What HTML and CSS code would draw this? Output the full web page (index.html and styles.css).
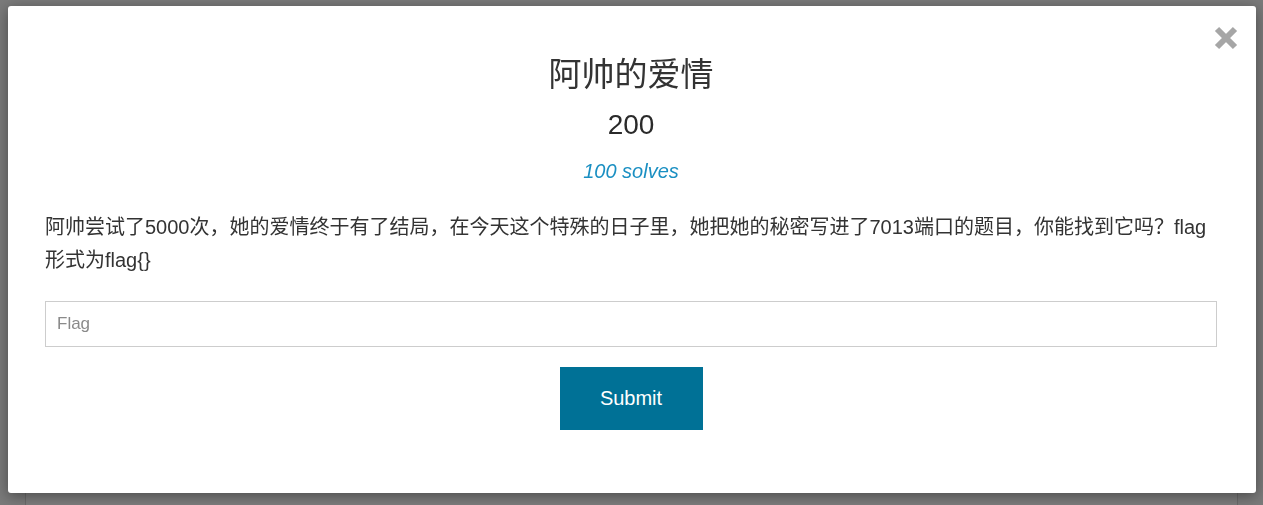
FILE: index.html
```html
<!DOCTYPE html>
<html lang="zh-CN">
<head>
<meta charset="utf-8">
<title>阿帅的爱情</title>
<link rel="stylesheet" href="styles.css">
</head>
<body>
<div class="page">
  <div class="page-card"></div>
</div>
<div class="backdrop">
  <div class="modal">
    <button class="close" aria-label="Close">
      <svg width="24" height="24" viewBox="0 0 24 24"><path d="M3 3 L21 21 M21 3 L3 21" stroke="#a6a6a6" stroke-width="6" stroke-linecap="butt"/></svg>
    </button>
    <h2 class="title">阿帅的爱情</h2>
    <div class="points">200</div>
    <div class="solves">100 solves</div>
    <p class="desc">阿帅尝试了5000次，她的爱情终于有了结局，在今天这个特殊的日子里，她把她的秘密写进了7013端口的题目，你能找到它吗？flag形式为flag{}</p>
    <input class="flag-input" type="text" placeholder="Flag">
    <div class="actions">
      <button class="submit">Submit</button>
    </div>
  </div>
</div>
</body>
</html>
```
FILE: styles.css
```css
html, body {
  margin: 0;
  padding: 0;
}
body {
  background: #7a7a7a;
  font-family: "Liberation Sans", "Noto Sans CJK SC", sans-serif;
  color: #333;
  width: 1263px;
  height: 505px;
  overflow: hidden;
}
.page {
  height: 505px;
  padding: 470px 25px 0;
  box-sizing: border-box;
}
.page-card {
  height: 100%;
  border-left: 1px solid #6a6a6a;
  border-right: 1px solid #6a6a6a;
  background: #7d7d7d;
}
.backdrop {
  position: fixed;
  inset: 0;
  padding: 6px 7px 0 8px;
}
.modal {
  position: relative;
  box-sizing: border-box;
  width: 1248px;
  height: 487px;
  background: #fff;
  border-radius: 3px;
  box-shadow: 0 3px 14px rgba(0, 0, 0, 0.4);
  padding: 46px 39px 0 37px;
  display: flex;
  flex-direction: column;
}
.close {
  position: absolute;
  top: 18px;
  right: 16px;
  width: 28px;
  height: 28px;
  padding: 2px;
  border: 0;
  background: none;
  display: flex;
  align-items: center;
  justify-content: center;
}
.title {
  margin: 0;
  text-align: center;
  font-family: "Noto Sans CJK SC", "Liberation Sans", sans-serif;
  font-weight: 400;
  font-size: 33px;
  line-height: 40px;
  color: #333;
}
.points {
  margin-top: 15px;
  text-align: center;
  font-size: 28px;
  line-height: 36px;
  color: #2a2a2a;
}
.solves {
  margin-top: 15px;
  text-align: center;
  font-style: italic;
  font-size: 20px;
  line-height: 26px;
  color: #1a8fc2;
}
.desc {
  margin: 27px 0 0;
  font-size: 20px;
  line-height: 33px;
  color: #333;
}
.flag-input {
  margin-top: 24px;
  box-sizing: border-box;
  width: 100%;
  height: 46px;
  border: 1px solid #cdcdcd;
  padding: 0 11px;
  font-family: "Liberation Sans", sans-serif;
  font-size: 17px;
  color: #333;
  outline: none;
}
.flag-input::placeholder {
  color: #8a8a8a;
}
.actions {
  margin-top: 20px;
  display: flex;
  justify-content: center;
}
.submit {
  width: 143px;
  height: 63px;
  border: 0;
  background: #007196;
  color: #fff;
  font-family: "Liberation Sans", sans-serif;
  font-size: 20px;
  padding: 0;
}
```
